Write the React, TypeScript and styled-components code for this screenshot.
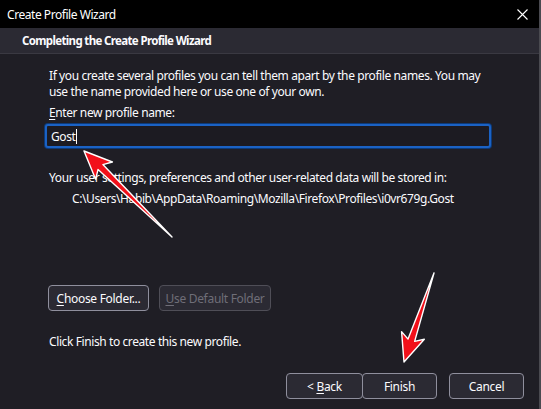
import React from 'react';
import styled, { createGlobalStyle } from 'styled-components';

const GlobalStyle = createGlobalStyle`
  * {
    margin: 0;
    padding: 0;
    box-sizing: border-box;
  }

  body {
    background: #1f1e25;
    font-family: "Noto Sans", "Open Sans", sans-serif;
    font-size: 12px;
    letter-spacing: -0.4px;
    color: #fbfbfe;
  }
`;

const Window = styled.div`
  position: relative;
  width: 541px;
  height: 409px;
  display: flex;
  flex-direction: column;
  background: #1f1e25;
  border-right: 2px solid #4a4a50;
  overflow: hidden;
`;

const TitleBar = styled.div`
  height: 28px;
  display: flex;
  align-items: center;
  justify-content: space-between;
  padding: 0 11px 0 7px;
  background: #000;
  color: #fff;
  font-size: 12px;
  letter-spacing: -0.45px;
`;

const CloseIcon = styled.svg`
  width: 11px;
  height: 11px;
`;

const Header = styled.div`
  height: 26px;
  display: flex;
  align-items: center;
  padding-left: 22px;
  background: #2b2a33;
  border-bottom: 1px solid #3a3942;
  font-weight: 700;
  font-size: 11.5px;
  letter-spacing: -0.65px;
`;

const Body = styled.div`
  flex: 1;
  display: flex;
  flex-direction: column;
  padding: 14px 48px 0 49px;
`;

const Paragraph = styled.p<{ $top?: number; $indent?: number }>`
  line-height: 16px;
  margin-top: ${({ $top }) => $top ?? 0}px;
  padding-left: ${({ $indent }) => $indent ?? 0}px;
  white-space: nowrap;
`;

const Key = styled.span`
  text-decoration: underline;
  text-underline-offset: 2px;
`;

const NameField = styled.div`
  margin: 3px 0 0 -4px;
  width: 446px;
  height: 24px;
  display: flex;
  align-items: center;
  padding-left: 4px;
  background: #1c1b22;
  border: 2px solid #1b62c4;
  border-radius: 3px;
  box-shadow: 0 0 0 1px #0d3a78;
`;

const Caret = styled.span`
  display: inline-block;
  width: 1px;
  height: 15px;
  margin-left: 1px;
  background: #fff;
`;

const ButtonRow = styled.div<{ $top?: number }>`
  display: flex;
  gap: 10px;
  margin: ${({ $top }) => $top ?? 0}px 0 0 -1px;
`;

const Button = styled.button<{ $width: number; $disabled?: boolean }>`
  width: ${({ $width }) => $width}px;
  height: 26px;
  background: #2b2a33;
  border: 1px solid ${({ $disabled }) => ($disabled ? '#4f4e57' : '#8f8f9d')};
  border-radius: 4px;
  color: ${({ $disabled }) => ($disabled ? '#6f6e78' : '#fbfbfe')};
  font-family: inherit;
  font-size: 12px;
  letter-spacing: -0.3px;
`;

const Footer = styled.div`
  display: flex;
  justify-content: flex-end;
  padding: 0 15px 10px 0;
`;

const FooterGroup = styled.div`
  display: flex;
  margin-right: 12px;

  & > button + button {
    margin-left: -1px;
  }
`;

const Overlay = styled.svg`
  position: absolute;
  inset: 0;
  pointer-events: none;
`;

type ArrowProps = { x1: number; y1: number; x2: number; y2: number };

const Arrow = ({ x1, y1, x2, y2 }: ArrowProps) => {
  const len = Math.hypot(x2 - x1, y2 - y1);
  const angle = (Math.atan2(y2 - y1, x2 - x1) * 180) / Math.PI;
  const h = 23;
  const points = [
    [0, 0],
    [len - h, -3.5],
    [len - h - 5, -12],
    [len, 0],
    [len - h - 5, 12],
    [len - h, 3.5],
  ]
    .map((p) => p.join(','))
    .join(' ');
  return (
    <polygon
      points={points}
      transform={`translate(${x1} ${y1}) rotate(${angle})`}
      fill="#f2101a"
      stroke="#fff"
      strokeWidth={1.4}
      strokeLinejoin="round"
    />
  );
};

export default function App() {
  return (
    <>
      <GlobalStyle />
      <Window>
        <TitleBar>
          <span>Create Profile Wizard</span>
          <CloseIcon viewBox="0 0 11 11">
            <path d="M0.5 0.5 L10.5 10.5 M10.5 0.5 L0.5 10.5" stroke="#fff" strokeWidth="1.1" />
          </CloseIcon>
        </TitleBar>
        <Header>Completing the Create Profile Wizard</Header>
        <Body>
          <Paragraph>
            If you create several profiles you can tell them apart by the profile names. You may
            <br />
            use the name provided here or use one of your own.
          </Paragraph>
          <Paragraph $top={5}>
            <Key>E</Key>nter new profile name:
          </Paragraph>
          <NameField>
            Gost
            <Caret />
          </NameField>
          <Paragraph $top={22}>
            Your user settings, preferences and other user-related data will be stored in:
          </Paragraph>
          <Paragraph $top={5} $indent={23}>
            C:\Users\Habib\AppData\Roaming\Mozilla\Firefox\Profiles\i0vr679g.Gost
          </Paragraph>
          <ButtonRow $top={78}>
            <Button $width={101}>
              <Key>C</Key>hoose Folder...
            </Button>
            <Button $width={112} $disabled>
              <Key>U</Key>se Default Folder
            </Button>
          </ButtonRow>
          <Paragraph $top={23}>Click Finish to create this new profile.</Paragraph>
        </Body>
        <Footer>
          <FooterGroup>
            <Button $width={77}>
              &lt; <Key>B</Key>ack
            </Button>
            <Button $width={75}>Finish</Button>
          </FooterGroup>
          <Button $width={75}>Cancel</Button>
        </Footer>
        <Overlay width="541" height="409" viewBox="0 0 541 409">
          <Arrow x1={172} y1={237} x2={84} y2={151} />
          <Arrow x1={434} y1={273} x2={404} y2={362} />
        </Overlay>
      </Window>
    </>
  );
}
